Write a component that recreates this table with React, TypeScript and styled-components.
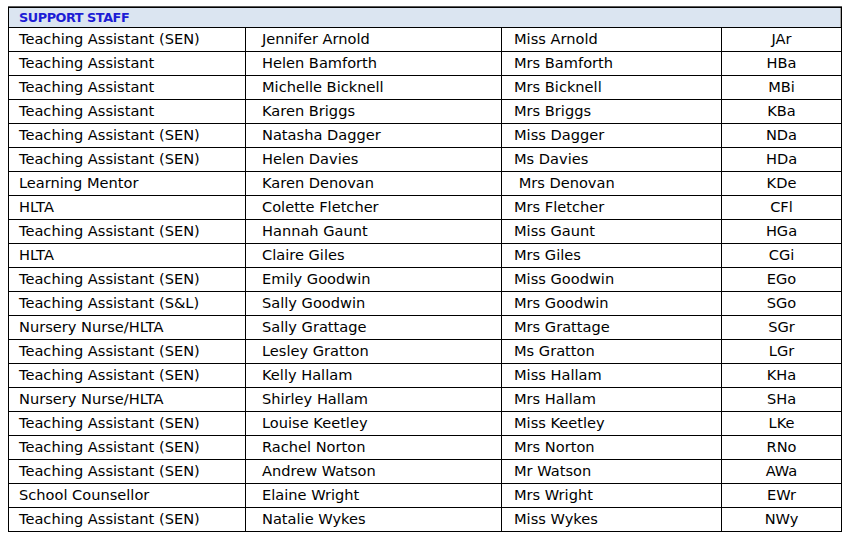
import React from "react";
import styled, { createGlobalStyle } from "styled-components";

type Staff = {
  role: string;
  name: string;
  title: string;
  code: string;
};

const staff: Staff[] = [
  { role: "Teaching Assistant (SEN)", name: "Jennifer Arnold", title: "Miss Arnold", code: "JAr" },
  { role: "Teaching Assistant", name: "Helen Bamforth", title: "Mrs Bamforth", code: "HBa" },
  { role: "Teaching Assistant", name: "Michelle Bicknell", title: "Mrs Bicknell", code: "MBi" },
  { role: "Teaching Assistant", name: "Karen Briggs", title: "Mrs Briggs", code: "KBa" },
  { role: "Teaching Assistant (SEN)", name: "Natasha Dagger", title: "Miss Dagger", code: "NDa" },
  { role: "Teaching Assistant (SEN)", name: "Helen Davies", title: "Ms Davies", code: "HDa" },
  { role: "Learning Mentor", name: "Karen Denovan", title: "\u00a0Mrs Denovan", code: "KDe" },
  { role: "HLTA", name: "Colette Fletcher", title: "Mrs Fletcher", code: "CFl" },
  { role: "Teaching Assistant (SEN)", name: "Hannah Gaunt", title: "Miss Gaunt", code: "HGa" },
  { role: "HLTA", name: "Claire Giles", title: "Mrs Giles", code: "CGi" },
  { role: "Teaching Assistant (SEN)", name: "Emily Goodwin", title: "Miss Goodwin", code: "EGo" },
  { role: "Teaching Assistant (S&L)", name: "Sally Goodwin", title: "Mrs Goodwin", code: "SGo" },
  { role: "Nursery Nurse/HLTA", name: "Sally Grattage", title: "Mrs Grattage", code: "SGr" },
  { role: "Teaching Assistant (SEN)", name: "Lesley Gratton", title: "Ms Gratton", code: "LGr" },
  { role: "Teaching Assistant (SEN)", name: "Kelly Hallam", title: "Miss Hallam", code: "KHa" },
  { role: "Nursery Nurse/HLTA", name: "Shirley Hallam", title: "Mrs Hallam", code: "SHa" },
  { role: "Teaching Assistant (SEN)", name: "Louise Keetley", title: "Miss Keetley", code: "LKe" },
  { role: "Teaching Assistant (SEN)", name: "Rachel Norton", title: "Mrs Norton", code: "RNo" },
  { role: "Teaching Assistant (SEN)", name: "Andrew Watson", title: "Mr Watson", code: "AWa" },
  { role: "School Counsellor", name: "Elaine Wright", title: "Mrs Wright", code: "EWr" },
  { role: "Teaching Assistant (SEN)", name: "Natalie Wykes", title: "Miss Wykes", code: "NWy" },
];

const GlobalStyle = createGlobalStyle`
  html, body {
    margin: 0;
    padding: 0;
    background: #ffffff;
  }
  body {
    font-family: "DejaVu Sans", "Liberation Sans", sans-serif;
    color: #000000;
  }
`;

const Page = styled.div`
  padding: 7px 0 0 8px;
`;

const Grid = styled.div`
  display: grid;
  grid-template-columns: 236px 255px 219px 119px;
  grid-template-rows: 19px;
  grid-auto-rows: 23px;
  gap: 1px;
  padding: 1px;
  width: max-content;
  background: #000000;
  border-top: 1px solid #5a5a5a;
  margin-top: -1px;
`;

const Header = styled.div`
  grid-column: 1 / -1;
  display: flex;
  align-items: center;
  padding: 0 0 1px 10px;
  background: #dbe5f1;
  color: #1d1dd6;
  font-weight: bold;
  font-size: 12.8px;
  letter-spacing: -0.45px;
  box-shadow: inset -1px 0 0 #a6a6a6;
`;

const Cell = styled.div<{ $pad: number; $center?: boolean }>`
  background: #ffffff;
  display: flex;
  align-items: center;
  justify-content: ${(p) => (p.$center ? "center" : "flex-start")};
  padding-left: ${(p) => (p.$center ? 0 : p.$pad)}px;
  padding-bottom: 2px;
  font-size: 14.6px;
  white-space: pre;
  overflow: hidden;
`;

export default function App() {
  return (
    <>
      <GlobalStyle />
      <Page>
        <Grid>
          <Header>SUPPORT STAFF</Header>
          {staff.map((s) => (
            <React.Fragment key={s.code}>
              <Cell $pad={10}>{s.role}</Cell>
              <Cell $pad={16}>{s.name}</Cell>
              <Cell $pad={12}>{s.title}</Cell>
              <Cell $pad={0} $center>
                {s.code}
              </Cell>
            </React.Fragment>
          ))}
        </Grid>
      </Page>
    </>
  );
}
